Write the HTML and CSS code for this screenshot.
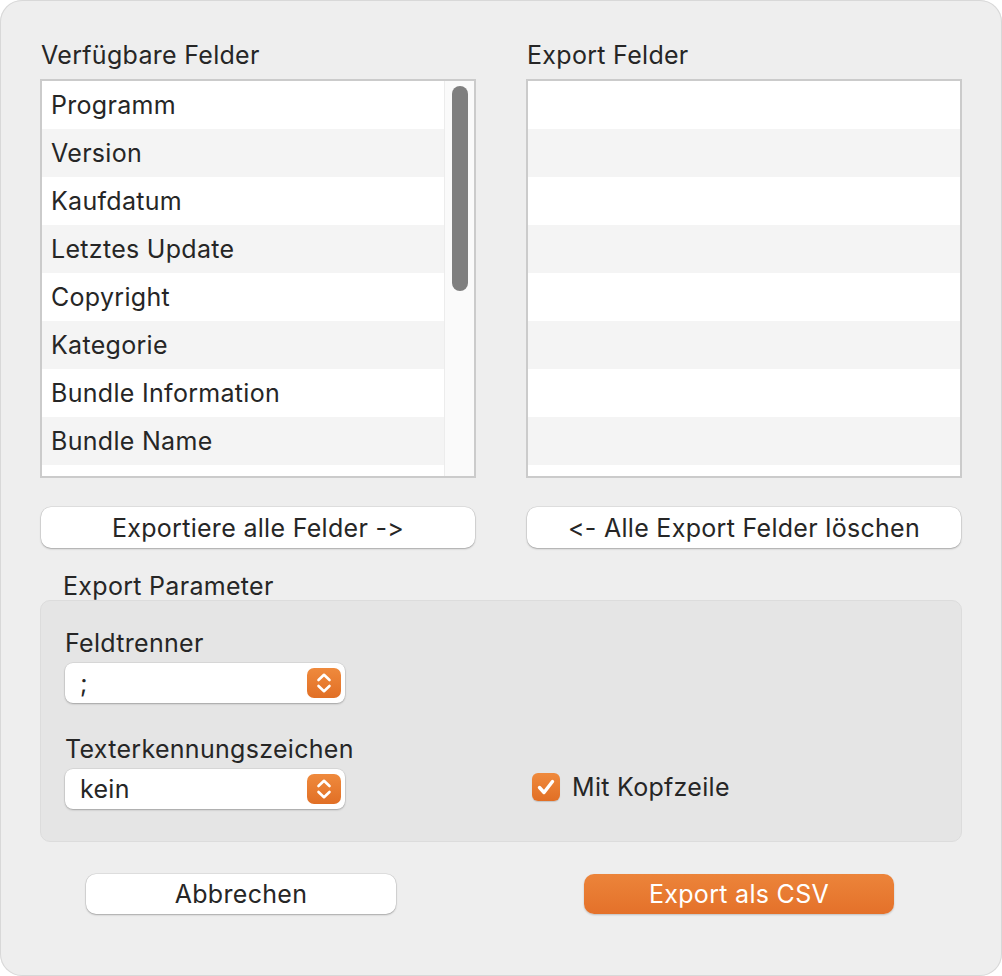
FILE: index.html
```html
<!DOCTYPE html>
<html lang="de">
<head>
<meta charset="utf-8">
<title>CSV Export</title>
<link rel="stylesheet" href="styles.css">
</head>
<body>
<div class="window">
  <div class="columns">
    <section class="col">
      <div class="heading">Verfügbare Felder</div>
      <div class="list">
        <div class="rows">
          <div class="row">Programm</div>
          <div class="row">Version</div>
          <div class="row">Kaufdatum</div>
          <div class="row">Letztes Update</div>
          <div class="row">Copyright</div>
          <div class="row">Kategorie</div>
          <div class="row">Bundle Information</div>
          <div class="row">Bundle Name</div>
          <div class="row"></div>
        </div>
        <div class="scroller"><div class="thumb"></div></div>
      </div>
      <button class="btn">Exportiere alle Felder -&gt;</button>
    </section>
    <section class="col">
      <div class="heading">Export Felder</div>
      <div class="list">
        <div class="rows">
          <div class="row"></div>
          <div class="row"></div>
          <div class="row"></div>
          <div class="row"></div>
          <div class="row"></div>
          <div class="row"></div>
          <div class="row"></div>
          <div class="row"></div>
          <div class="row"></div>
        </div>
      </div>
      <button class="btn">&lt;- Alle Export Felder löschen</button>
    </section>
  </div>

  <div class="group-title">Export Parameter</div>
  <div class="group">
    <div class="group-left">
      <div class="field-label">Feldtrenner</div>
      <div class="popup">
        <span class="popup-value">;</span>
        <span class="stepper">
          <svg width="34" height="30" viewBox="0 0 34 30"><path d="M11.5 12 L17 6.8 L22.5 12 M11.5 18 L17 23.2 L22.5 18" fill="none" stroke="#fff" stroke-width="2.6" stroke-linecap="round" stroke-linejoin="round"/></svg>
        </span>
      </div>
      <div class="field-label second">Texterkennungszeichen</div>
      <div class="popup">
        <span class="popup-value">kein</span>
        <span class="stepper">
          <svg width="34" height="30" viewBox="0 0 34 30"><path d="M11.5 12 L17 6.8 L22.5 12 M11.5 18 L17 23.2 L22.5 18" fill="none" stroke="#fff" stroke-width="2.6" stroke-linecap="round" stroke-linejoin="round"/></svg>
        </span>
      </div>
    </div>
    <div class="group-right">
      <label class="check">
        <span class="box">
          <svg width="28" height="28" viewBox="0 0 28 28"><path d="M7.5 14.5 L12 19.5 L20.5 8.5" fill="none" stroke="#fff" stroke-width="3.4" stroke-linecap="round" stroke-linejoin="round"/></svg>
        </span>
        <span>Mit Kopfzeile</span>
      </label>
    </div>
  </div>

  <div class="actions">
    <button class="btn action">Abbrechen</button>
    <button class="btn action primary">Export als CSV</button>
  </div>
</div>
</body>
</html>
```

FILE: styles.css
```css
* { box-sizing: border-box; }

html, body {
  margin: 0;
  padding: 0;
  background: #ffffff;
}

body {
  font-family: "Inter", "Noto Sans", "Liberation Sans", sans-serif;
  font-size: 25px;
  letter-spacing: 0.3px;
  font-feature-settings: "calt" 0, "liga" 0;
  font-variant-ligatures: none;
  color: #262626;
}

.window {
  width: 1002px;
  height: 976px;
  background: #eeeeee;
  border-radius: 22px;
  box-shadow: inset 0 0 0 1px #d8d8d8;
  padding: 40px 40px 0 40px;
  overflow: hidden;
}

.columns {
  display: flex;
  gap: 50px;
}

.col {
  width: 436px;
  display: flex;
  flex-direction: column;
}

.heading {
  line-height: 30px;
  height: 30px;
  padding-left: 1px;
  margin-bottom: 9px;
}

.list {
  height: 399px;
  border: 2px solid #cbcbcb;
  background: #ffffff;
  display: flex;
  overflow: hidden;
}

.rows {
  flex: 1;
  display: flex;
  flex-direction: column;
}

.row {
  height: 48px;
  flex: none;
  line-height: 48px;
  padding-left: 9px;
  background: #ffffff;
}

.row:nth-child(even) {
  background: #f4f4f4;
}

.scroller {
  width: 30px;
  flex: none;
  background: #fafafa;
  border-left: 1px solid #ececec;
  padding: 5px 0 0 7px;
}

.thumb {
  width: 16px;
  height: 205px;
  border-radius: 8px;
  background: #7f7f7f;
}

.btn {
  font-family: inherit;
  font-size: 25px;
  letter-spacing: 0.3px;
  font-feature-settings: "calt" 0, "liga" 0;
  font-variant-ligatures: none;
  color: #262626;
  background: #ffffff;
  border: none;
  border-radius: 10px;
  height: 41px;
  padding: 0;
  box-shadow: 0 0 0 0.5px rgba(0, 0, 0, 0.12), 0 1px 2px rgba(0, 0, 0, 0.25);
}

.col .btn {
  margin-top: 29px;
  margin-left: 1px;
  width: 434px;
}

.group-title {
  margin-top: 24px;
  margin-left: 23px;
  line-height: 28px;
  height: 28px;
}

.group {
  height: 242px;
  background: #e5e5e5;
  border: 1px solid #dcdcdc;
  border-radius: 10px;
  display: flex;
  padding: 28px 0 0 24px;
}

.group-left {
  width: 467px;
}

.field-label {
  line-height: 28px;
  height: 28px;
}

.field-label.second {
  margin-top: 32px;
}

.popup {
  margin-top: 6px;
  width: 280px;
  height: 40px;
  background: #ffffff;
  border-radius: 8px;
  box-shadow: 0 0 0 0.5px rgba(0, 0, 0, 0.1), 0 1px 2px rgba(0, 0, 0, 0.25);
  display: flex;
  align-items: center;
  justify-content: space-between;
  padding: 0 4px 0 15px;
}

.popup-value {
  line-height: 40px;
}

.stepper {
  width: 34px;
  height: 30px;
  border-radius: 7px;
  background: linear-gradient(#ef8a3d, #e16f25);
  display: flex;
}

.group-right {
  display: flex;
  align-items: flex-start;
  padding-top: 143px;
}

.check {
  display: flex;
  align-items: center;
  gap: 12px;
}

.box {
  width: 28px;
  height: 28px;
  border-radius: 6px;
  background: linear-gradient(#ef8a3d, #e16f25);
  display: flex;
  box-shadow: 0 1px 1px rgba(0, 0, 0, 0.15);
}

.actions {
  display: flex;
  gap: 188px;
  margin-top: 32px;
  padding-left: 46px;
}

.btn.action {
  width: 310px;
  height: 40px;
}

.btn.primary {
  background: linear-gradient(#ec843a, #e4712a);
  color: #ffffff;
  box-shadow: 0 1px 2px rgba(0, 0, 0, 0.2);
}
```
